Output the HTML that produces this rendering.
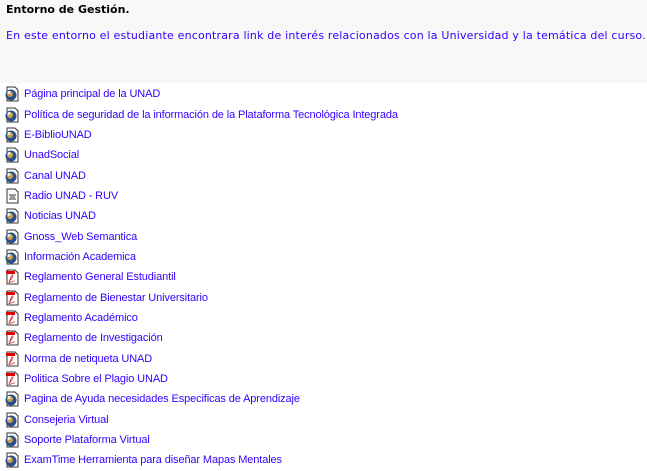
<!DOCTYPE html>
<html><head><meta charset="utf-8"><style>
body{margin:0;width:647px;height:470px;background:#fff;overflow:hidden;font-family:"Liberation Sans",Arial,sans-serif}
.hd{background:#f8f8f8;height:83px;position:relative}
.t{position:absolute;left:6px;top:3px;font:bold 11px "DejaVu Sans",Verdana,sans-serif;color:#000}
.d{position:absolute;left:6px;top:29px;font:11px "DejaVu Sans",Verdana,sans-serif;color:#3300ff;white-space:nowrap;letter-spacing:0.18px}
ul{list-style:none;margin:0;padding:0;position:absolute;left:4px;top:84px}
li{height:20.35px;display:flex;align-items:center;font-size:11px;color:#3300ff;white-space:nowrap;letter-spacing:-0.12px}
li svg{width:16px;height:16px;margin-right:4px;flex:none}
</style></head><body>
<div class="hd"><div class="t">Entorno de Gestión.</div><div class="d">En este entorno el estudiante encontrara link de interés relacionados con la Universidad y la temática del curso.</div></div>
<svg width="0" height="0" style="position:absolute"><defs>
<g id="w"><path d="M3 1h8l3 3v11H3z" fill="#fff" stroke="#333"/><circle cx="7" cy="9" r="5.5" fill="#2b4f8a"/><circle cx="6" cy="8" r="3" fill="#c9a04a"/><circle cx="5" cy="6.5" r="1.5" fill="#eee"/></g>
<g id="p"><path d="M3 1h8l3 3v11H3z" fill="#fff" stroke="#333"/><rect x="2" y="2" width="9" height="3" fill="#d00"/><path d="M5 13c2-5 3-8 4-7s-3 5-4 7 5-2 6-1" fill="none" stroke="#c33" stroke-width="0.8"/></g>
<g id="r"><path d="M3 1h8l3 3v11H3z" fill="#fff" stroke="#333"/><path d="M5 7h7M6 9h5M5 11h7" stroke="#333"/></g>
</defs></svg>
<ul>
<li><svg><use href="#w"/></svg>Página principal de la UNAD</li>
<li><svg><use href="#w"/></svg>Política de seguridad de la información de la Plataforma Tecnológica Integrada</li>
<li><svg><use href="#w"/></svg>E-BiblioUNAD</li>
<li><svg><use href="#w"/></svg>UnadSocial</li>
<li><svg><use href="#w"/></svg>Canal UNAD</li>
<li><svg><use href="#r"/></svg>Radio UNAD - RUV</li>
<li><svg><use href="#w"/></svg>Noticias UNAD</li>
<li><svg><use href="#w"/></svg>Gnoss_Web Semantica</li>
<li><svg><use href="#w"/></svg>Información Academica</li>
<li><svg><use href="#p"/></svg>Reglamento General Estudiantil</li>
<li><svg><use href="#p"/></svg>Reglamento de Bienestar Universitario</li>
<li><svg><use href="#p"/></svg>Reglamento Académico</li>
<li><svg><use href="#p"/></svg>Reglamento de Investigación</li>
<li><svg><use href="#p"/></svg>Norma de netiqueta UNAD</li>
<li><svg><use href="#p"/></svg>Politica Sobre el Plagio UNAD</li>
<li><svg><use href="#w"/></svg>Pagina de Ayuda necesidades Especificas de Aprendizaje</li>
<li><svg><use href="#w"/></svg>Consejeria Virtual</li>
<li><svg><use href="#w"/></svg>Soporte Plataforma Virtual</li>
<li><svg><use href="#w"/></svg>ExamTime Herramienta para diseñar Mapas Mentales</li>
</ul>
</body></html>
